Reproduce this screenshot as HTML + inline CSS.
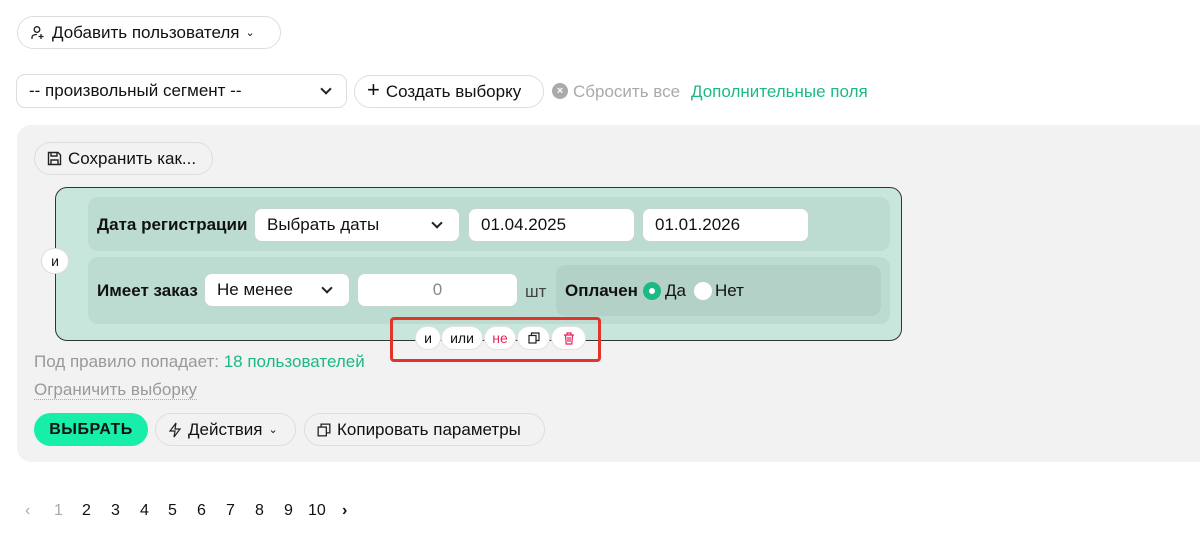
<!DOCTYPE html>
<html><head><meta charset="utf-8"><style>
*{box-sizing:border-box}
body{margin:0;width:1200px;height:533px;background:#fff;font-family:"Liberation Sans",sans-serif;font-size:17px;color:#111;position:relative;overflow:hidden}
.a{position:absolute}
.btn{position:absolute;border:1px solid #ddd;border-radius:17px;background:#fff;display:flex;align-items:center;gap:6px;padding:0 12px;height:33px;font-size:17px}
.inp{position:absolute;background:#fff;border-radius:8px;border:1px solid #c4d8d0;height:34px;display:flex;align-items:center;padding:0 12px;font-size:17px}
.chev{width:8px;height:8px;border-right:2px solid #222;border-bottom:2px solid #222;transform:rotate(45deg);position:absolute;right:18px;top:10px}
.pill{position:absolute;top:326px;height:24px;border-radius:12px;background:#fff;border:1px solid #e2e2e2;display:flex;align-items:center;justify-content:center;font-size:14px}
.pg{position:absolute;top:502px;font-size:16px}
</style></head><body>
<div class="btn" style="left:17px;top:16px;width:264px;">
<svg width="16" height="16" viewBox="0 0 16 16" fill="none" stroke="#222" stroke-width="1.3"><circle cx="7" cy="4.5" r="2.8"/><path d="M2 14v-1.5c0-2 1.8-3 5-3"/><path d="M11 9v5M8.5 11.5h5"/></svg>Добавить пользователя <span style="font-size:11px">⌄</span></div>
<div class="btn" style="left:16px;top:74px;width:331px;height:34px;border-radius:9px;">-- произвольный сегмент --<div class="chev" style="right:16px;top:10px"></div></div>
<div class="btn" style="left:354px;top:75px;width:190px;"><span style="font-size:22px;font-weight:300;margin-top:-3px">+</span>Создать выборку</div>
<div class="a" style="left:552px;top:83px;width:16px;height:16px;border-radius:50%;background:#aaa;color:#fff;font-size:11px;text-align:center;line-height:16px;font-weight:bold">×</div>
<div class="a" style="left:573px;top:82px;color:#aaa">Сбросить все</div>
<div class="a" style="left:691px;top:82px;color:#1db886">Дополнительные поля</div>
<div class="a" style="left:17px;top:125px;width:1200px;height:337px;background:#f2f2f2;border-radius:14px"></div>
<div class="btn" style="left:34px;top:142px;width:179px;background:#f2f2f2;">
<svg width="15" height="15" viewBox="0 0 15 15" fill="none" stroke="#222" stroke-width="1.4"><path d="M1.5 1.5h9.5l2.5 2.5v9.5h-12z"/><path d="M4 1.5v3.5h6V1.5M4 13.5V9h7v4.5"/></svg>Сохранить как...</div>
<div class="a" style="left:55px;top:187px;width:847px;height:154px;background:#c8e6dc;border:1px solid #333;border-radius:12px"></div>
<div class="a" style="left:88px;top:197px;width:802px;height:54px;background:#bcdbd1;border-radius:10px"></div>
<div class="a" style="left:88px;top:257px;width:802px;height:67px;background:#bcdbd1;border-radius:10px"></div>
<div class="a" style="left:556px;top:265px;width:325px;height:51px;background:#b3d1c7;border-radius:10px"></div>
<div class="a" style="left:97px;top:215px;font-weight:bold">Дата регистрации</div>
<div class="inp" style="left:254px;top:208px;width:206px;">Выбрать даты<div class="chev"></div></div>
<div class="inp" style="left:468px;top:208px;width:167px;">01.04.2025</div>
<div class="inp" style="left:642px;top:208px;width:167px;">01.01.2026</div>
<div class="a" style="left:41px;top:248px;width:28px;height:26px;border-radius:13px;background:#fff;border:1px solid #ddd;font-size:14px;text-align:center;line-height:24px">и</div>
<div class="a" style="left:97px;top:281px;font-weight:bold">Имеет заказ</div>
<div class="inp" style="left:204px;top:273px;width:146px;">Не менее<div class="chev"></div></div>
<div class="inp" style="left:357px;top:273px;width:161px;justify-content:center;color:#888">0</div>
<div class="a" style="left:525px;top:282px;color:#444">шт</div>
<div class="a" style="left:565px;top:281px;font-weight:bold">Оплачен</div>
<div class="a" style="left:643px;top:282px;width:18px;height:18px;border-radius:50%;background:#1db886"><div class="a" style="left:6px;top:6px;width:6px;height:6px;border-radius:50%;background:#fff"></div></div>
<div class="a" style="left:665px;top:281px">Да</div>
<div class="a" style="left:694px;top:282px;width:18px;height:18px;border-radius:50%;background:#fff"></div>
<div class="a" style="left:715px;top:281px">Нет</div>
<div class="a" style="left:390px;top:317px;width:211px;height:45px;border:3px solid #e0352b;border-radius:4px"></div>
<div class="pill" style="left:415px;width:26px">и</div>
<div class="pill" style="left:441px;width:42px">или</div>
<div class="pill" style="left:484px;width:32px;color:#e8245a">не</div>
<div class="pill" style="left:517px;width:33px"><svg width="12" height="12" viewBox="0 0 12 12" fill="none" stroke="#222" stroke-width="1.2"><rect x="1" y="3.5" width="7" height="7.5"/><path d="M3.5 3.5V1h7.5v7.5H8"/></svg></div>
<div class="pill" style="left:551px;width:35px"><svg width="12" height="13" viewBox="0 0 12 13" fill="none" stroke="#e8245a" stroke-width="1.2"><path d="M1 3h10M4 3V1h4v2M2.5 3l.7 9h5.6l.7-9M5 5v5M7 5v5"/></svg></div>
<div class="a" style="left:34px;top:352px;color:#999">Под правило попадает: <span style="color:#1db886">18 пользователей</span></div>
<div class="a" style="left:34px;top:381px;color:#999;border-bottom:1px dotted #aaa;line-height:18px">Ограничить выборку</div>
<div class="a" style="left:34px;top:413px;width:114px;height:33px;border-radius:17px;background:#16eeaa;font-weight:bold;font-size:16px;text-align:center;line-height:33px;letter-spacing:.5px">ВЫБРАТЬ</div>
<div class="btn" style="left:155px;top:413px;width:141px;background:#f2f2f2;"><svg width="14" height="16" viewBox="0 0 14 16" fill="none" stroke="#222" stroke-width="1.2"><path d="M8 1L2 9h5l-1 6 6-8H7z"/></svg>Действия <span style="font-size:11px">⌄</span></div>
<div class="btn" style="left:304px;top:413px;width:241px;background:#f2f2f2;"><svg width="14" height="14" viewBox="0 0 12 12" fill="none" stroke="#222" stroke-width="1.1"><rect x="1" y="3.5" width="7" height="7.5"/><path d="M3.5 3.5V1h7.5v7.5H8"/></svg>Копировать параметры</div>
<div class="pg" style="left:25px;color:#aaa">‹</div>
<div class="pg" style="left:54px;color:#aaa">1</div>
<div class="pg" style="left:82px">2</div><div class="pg" style="left:111px">3</div><div class="pg" style="left:140px">4</div><div class="pg" style="left:168px">5</div><div class="pg" style="left:197px">6</div><div class="pg" style="left:226px">7</div><div class="pg" style="left:255px">8</div><div class="pg" style="left:284px">9</div><div class="pg" style="left:308px">10</div>
<div class="pg" style="left:342px;font-weight:bold">›</div>
</body></html>
